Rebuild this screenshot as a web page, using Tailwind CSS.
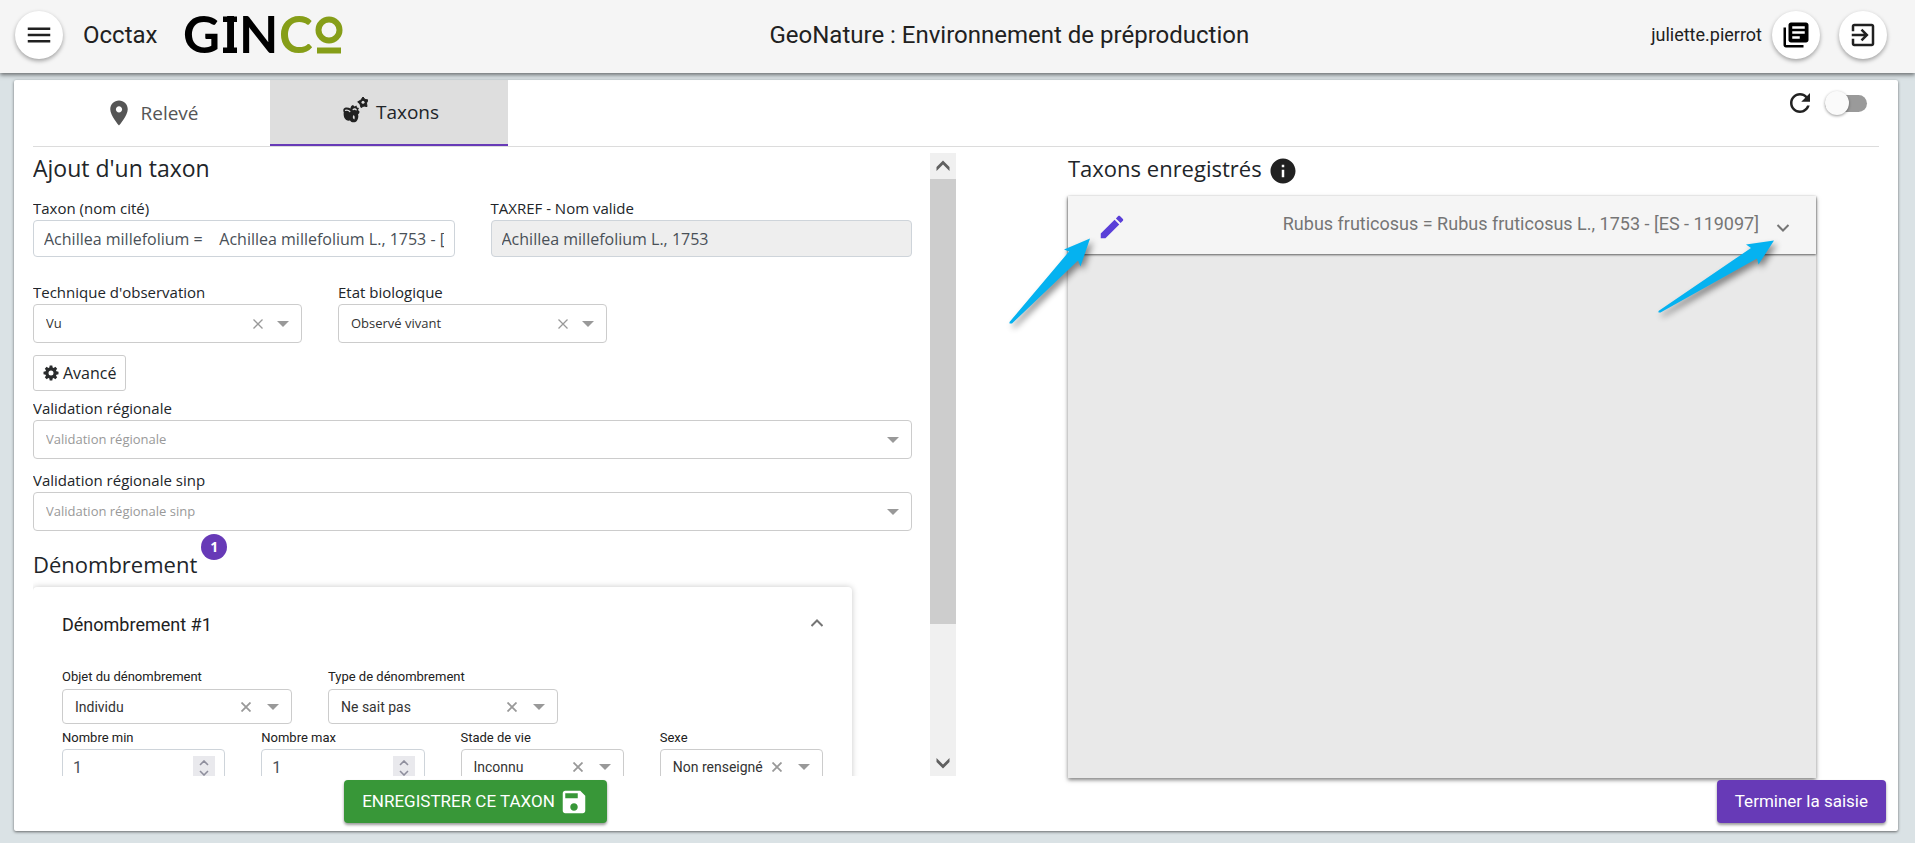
<!DOCTYPE html>
<html lang="fr">
<head>
<meta charset="utf-8">
<title>GeoNature - Occtax</title>
<script src="https://cdn.jsdelivr.net/npm/@tailwindcss/browser@4"></script>
</head>
<body class="h-screen min-h-[600px] flex flex-col bg-[#dae2e5] overflow-hidden font-['Open_Sans','Noto_Sans',sans-serif] text-[#212529]">

<header class="relative z-10 h-[73px] shrink-0 flex items-center justify-between pl-[15px] pr-7 pb-1 bg-[#f5f5f5] shadow-[0_2px_4px_rgba(0,0,0,0.5)] font-[Roboto,sans-serif] text-[#212121]">
  <div class="flex items-center pr-5">
    <button type="button" aria-label="Menu" class="size-12 rounded-full bg-white shadow-[0_2px_4px_rgba(0,0,0,0.35)] grid place-items-center">
      <svg class="size-[30px]" viewBox="0 0 24 24" fill="currentColor"><path d="M3 18h18v-2H3v2zm0-5h18v-2H3v2zm0-7v2h18V6H3z"/></svg>
    </button>
    <span class="ml-5 text-2xl">Occtax</span>
    <svg class="ml-7 w-[162px] h-[68px] overflow-visible" viewBox="0 -12 162 68" role="img" aria-label="GINCO">
      <g font-family="Lato, sans-serif" font-weight="700" font-size="51">
        <text x="-2" y="40" fill="#000">G</text>
        <text x="38" y="40" fill="#000">I</text>
        <text x="54" y="40" fill="#000">N</text>
        <text x="94" y="40" fill="#869e18">C</text>
      </g>
      <path d="M38 3.500h14v5.500H38zM38 34.500h14V40H38z" fill="#000"/>
      <circle cx="144" cy="17" r="10.500" fill="none" stroke="#869e18" stroke-width="6"/>
      <path d="M132 34.500h24v6h-24z" fill="#869e18"/>
    </svg>
  </div>
  <h1 class="text-2xl">GeoNature : Environnement de préproduction</h1>
  <div class="flex items-center justify-end">
    <span class="text-lg">juliette.pierrot</span>
    <button type="button" aria-label="Documentation" class="ml-2.5 size-12 rounded-full bg-white shadow-[0_2px_4px_rgba(0,0,0,0.35)] grid place-items-center">
      <svg class="size-[30px]" viewBox="0 0 24 24" fill="#000"><path d="M4 6H2v14c0 1.100.9 2 2 2h14v-2H4V6zm16-4H8c-1.100 0-2 .9-2 2v12c0 1.100.9 2 2 2h12c1.100 0 2-.9 2-2V4c0-1.100-.9-2-2-2zm-1 9H9V9h10v2zm-4 4H9v-2h6v2zm4-8H9V5h10v2z"/></svg>
    </button>
    <button type="button" aria-label="Déconnexion" class="ml-[19px] size-12 rounded-full bg-white shadow-[0_2px_4px_rgba(0,0,0,0.35)] grid place-items-center">
      <svg class="size-[30px]" viewBox="0 0 24 24" fill="currentColor"><path d="M10.090 15.590L11.500 17l5-5-5-5-1.410 1.410L12.670 11H3v2h9.670l-2.580 2.590zM19 3H5c-1.110 0-2 .9-2 2v4h2V5h14v14H5v-4H3v4c0 1.100.89 2 2 2h14c1.100 0 2-.9 2-2V5c0-1.100-.9-2-2-2z"/></svg>
    </button>
  </div>
</header>

<main class="flex-1 min-h-0 flex flex-col mt-[7px] mb-3 ml-3.5 mr-[17px] bg-white rounded-xs shadow-[0_1px_3px_rgba(0,0,0,0.55)]">

  <div class="mx-[19px] h-[67px] shrink-0 flex border-b border-[#dcdcdc]">
    <nav class="flex text-[19px]">
      <a href="#releve" class="w-[237px] flex items-center justify-center gap-1.5 text-[#555]">
        <svg class="size-[30px]" viewBox="0 0 24 24" fill="currentColor"><path d="M12 2C8.130 2 5 5.130 5 9c0 5.250 7 13 7 13s7-7.750 7-13c0-3.870-3.130-7-7-7zm0 9.500c-1.380 0-2.500-1.120-2.500-2.500s1.120-2.500 2.500-2.500 2.500 1.120 2.500 2.500-1.120 2.500-2.500 2.500z"/></svg>
        Relevé
      </a>
      <a href="#taxons" class="w-[238px] pl-1 flex items-center justify-center gap-2 bg-[#dedede] border-b-2 border-[#673ab7]">
        <svg class="w-[25px] h-[26px] mb-1" viewBox="0 0 25 26" fill="#212121">
          <path d="M10 8l1.500 1.500 2-1 .5 2 2 .5-1 2 1.500 1.500c0 2-1 2.500-1.500 3 1 3-.5 6.500-2.500 7.500-2 .8-4.500.3-5.500-1.500-2.500.5-4.500-.5-5.500-2.500C.5 18.500.5 16.500.8 15.500-.2 13.500.3 11.500 2 10.800c2-.6 4 0 5.500.7C7.500 9.500 8.500 8.500 10 8z"/>
          <path d="M2.500 13.300c1.500-.5 3.200 0 4.300 1.200M10.200 12.500c1-.8 2.300-.6 3 .3" fill="none" stroke="#dedede" stroke-width="1.300" stroke-linecap="round"/>
          <path d="M10.500 18c1.200.8 1.700 2.600.8 4.500-1.500-.5-2-2.700-.8-4.500z" fill="#dedede"/>
          <path d="M20 0l1.800 2.300 3.200.7-1.500 3 .5 3.600-3-.6L18 10.500l-1-3.300-2.300-2.400 3-1.500z" stroke="#212121" stroke-linejoin="round"/>
          <circle cx="20" cy="5.300" r="1.500" fill="#dedede"/>
        </svg>
        Taxons
      </a>
    </nav>
    <div class="ml-auto h-[46px] pr-3 flex items-center gap-2.5">
      <button type="button" aria-label="Rafraîchir">
        <svg class="size-[30px]" viewBox="0 0 24 24" fill="#212121"><path d="M17.650 6.350C16.200 4.900 14.210 4 12 4c-4.420 0-7.990 3.580-7.990 8s3.570 8 7.990 8c3.730 0 6.840-2.550 7.730-6h-2.080c-.82 2.330-3.040 4-5.650 4-3.310 0-6-2.690-6-6s2.690-6 6-6c1.660 0 3.140.69 4.220 1.780L13 11h7V4l-2.350 2.350z"/></svg>
      </button>
      <label class="w-[42px] h-[17px] rounded-full bg-[#9a9a9a] flex items-center cursor-pointer">
        <input type="checkbox" aria-label="Afficher" class="appearance-none size-6 shrink-0 rounded-full bg-[#fafafa] shadow-[0_1px_3px_rgba(0,0,0,0.4)]">
      </label>
    </div>
  </div>

  <div class="flex-1 min-h-0 mx-[19px] grid grid-cols-2 grid-rows-[minmax(0,1fr)]">

    <section class="mt-1.5 mb-0.5 flex min-h-0">
      <div class="flex-1 min-w-0 overflow-hidden pr-[18px]">
        <h2 class="h-11 pt-px text-[23px] leading-7">Ajout d'un taxon</h2>

        <div class="grid grid-cols-2 gap-9">
          <div>
            <label for="nom" class="block h-[23px] text-[15px] leading-[22px]">Taxon (nom cité)</label>
            <input id="nom" class="block w-full h-[37px] px-2.5 border border-[#ced4da] rounded text-base text-[#495057]" value="Achillea millefolium =&nbsp;&nbsp;&nbsp;&nbsp;Achillea millefolium L., 1753 - [ES - 79908]">
          </div>
          <div>
            <label for="valide" class="block h-[23px] text-[15px] leading-[22px]">TAXREF - Nom valide</label>
            <input id="valide" readonly class="block w-full h-[37px] px-2.5 border border-[#ced4da] rounded text-base text-[#495057] bg-[#eee]" value="Achillea millefolium L., 1753">
          </div>
        </div>

        <div class="mt-6 flex gap-9">
          <div class="w-[269px]">
            <label for="technique" class="block h-[23px] text-[15px] leading-[22px]">Technique d'observation</label>
            <div class="h-[39px] flex items-center border border-[#ccc] rounded pl-3 pr-3">
              <select id="technique" class="appearance-none flex-1 min-w-0 bg-transparent text-[13px] text-[#333]"><option>Vu</option></select>
              <button type="button" aria-label="Effacer" class="mr-3.5"><svg class="size-2.5" viewBox="0 0 10 10" stroke="#999" stroke-width="1.300"><path d="M.5.5l9 9m0-9l-9 9"/></svg></button>
              <svg class="w-3 h-1.5" viewBox="0 0 12 6" fill="#999"><path d="M0 0h12L6 6z"/></svg>
            </div>
          </div>
          <div class="w-[269px]">
            <label for="etat" class="block h-[23px] text-[15px] leading-[22px]">Etat biologique</label>
            <div class="h-[39px] flex items-center border border-[#ccc] rounded pl-3 pr-3">
              <select id="etat" class="appearance-none flex-1 min-w-0 bg-transparent text-[13px] text-[#333]"><option>Observé vivant</option></select>
              <button type="button" aria-label="Effacer" class="mr-3.5"><svg class="size-2.5" viewBox="0 0 10 10" stroke="#999" stroke-width="1.300"><path d="M.5.5l9 9m0-9l-9 9"/></svg></button>
              <svg class="w-3 h-1.5" viewBox="0 0 12 6" fill="#999"><path d="M0 0h12L6 6z"/></svg>
            </div>
          </div>
        </div>

        <button type="button" class="mt-3 h-9 px-[9px] flex items-center gap-1 border border-[#ccc] rounded-[3px] text-base">
          <svg class="size-4" viewBox="0 0 16 16" fill="#292b2c" fill-rule="evenodd"><path d="M6.700.5h2.600l.35 2.100 1 .4 1.700-1.200 1.850 1.850-1.200 1.700.4 1 2.100.35v2.600l-2.100.35-.4 1 1.200 1.700-1.850 1.850-1.700-1.200-1 .4-.35 2.100H6.700l-.35-2.100-1-.4-1.700 1.200L1.800 12.350l1.200-1.700-.4-1L.5 9.300V6.700l2.100-.35.4-1-1.200-1.700L3.650 1.800l1.700 1.200 1-.4zM8 5.500a2.500 2.500 0 100 5 2.500 2.500 0 000-5z"/></svg>
          Avancé
        </button>

        <div class="mt-1.5">
          <label for="valreg" class="block h-[23px] text-[15px] leading-[22px]">Validation régionale</label>
          <div class="h-[39px] flex items-center border border-[#ccc] rounded pl-3 pr-3">
            <select id="valreg" class="appearance-none flex-1 bg-transparent text-[13px] text-[#999]"><option>Validation régionale</option></select>
            <svg class="w-3 h-1.5" viewBox="0 0 12 6" fill="#999"><path d="M0 0h12L6 6z"/></svg>
          </div>
        </div>
        <div class="mt-2.5">
          <label for="valsinp" class="block h-[23px] text-[15px] leading-[22px]">Validation régionale sinp</label>
          <div class="h-[39px] flex items-center border border-[#ccc] rounded pl-3 pr-3">
            <select id="valsinp" class="appearance-none flex-1 bg-transparent text-[13px] text-[#999]"><option>Validation régionale sinp</option></select>
            <svg class="w-3 h-1.5" viewBox="0 0 12 6" fill="#999"><path d="M0 0h12L6 6z"/></svg>
          </div>
        </div>

        <div class="mt-[3px] h-[53px] flex items-start gap-1">
          <h2 class="pt-4 text-[22px] leading-7">Dénombrement</h2>
          <span class="size-[26px] rounded-full bg-[#673ab7] text-white text-sm font-bold grid place-items-center">1</span>
        </div>

        <div class="mr-[60px] px-[29px] h-[260px] rounded bg-white shadow-[0_0_6px_rgba(0,0,0,0.22)] font-[Roboto,sans-serif]">
          <div class="h-[78px] pb-0.5 flex items-center justify-between">
            <h3 class="text-lg leading-6 text-[#212121]">Dénombrement #1</h3>
            <svg class="w-3 h-3 mb-1" viewBox="3 0 12 12" fill="none" stroke="#757575" stroke-width="2"><path d="M3.500 9L9 3.500 14.500 9"/></svg>
          </div>
          <div class="flex gap-9">
            <div class="w-[230px]">
              <label for="objet" class="block h-6 text-[13px] leading-6 text-[#212121]">Objet du dénombrement</label>
              <div class="h-[35px] flex items-center border border-[#ccc] rounded pl-3 pr-3">
                <select id="objet" class="appearance-none flex-1 min-w-0 bg-transparent text-sm text-[#333]"><option>Individu</option></select>
                <button type="button" aria-label="Effacer" class="mr-4"><svg class="size-2.5" viewBox="0 0 10 10" stroke="#999" stroke-width="1.800"><path d="M.5.5l9 9m0-9l-9 9"/></svg></button>
                <svg class="w-3 h-1.5" viewBox="0 0 12 6" fill="#999"><path d="M0 0h12L6 6z"/></svg>
              </div>
            </div>
            <div class="w-[230px]">
              <label for="typed" class="block h-6 text-[13px] leading-6 text-[#212121]">Type de dénombrement</label>
              <div class="h-[35px] flex items-center border border-[#ccc] rounded pl-3 pr-3">
                <select id="typed" class="appearance-none flex-1 min-w-0 bg-transparent text-sm text-[#333]"><option>Ne sait pas</option></select>
                <button type="button" aria-label="Effacer" class="mr-4"><svg class="size-2.5" viewBox="0 0 10 10" stroke="#999" stroke-width="1.800"><path d="M.5.5l9 9m0-9l-9 9"/></svg></button>
                <svg class="w-3 h-1.5" viewBox="0 0 12 6" fill="#999"><path d="M0 0h12L6 6z"/></svg>
              </div>
            </div>
          </div>
          <div class="mt-0.5 grid grid-cols-4 gap-9">
            <div>
              <label for="nmin" class="block h-[23px] text-[13px] leading-6 text-[#212121]">Nombre min</label>
              <div class="h-[37px] flex items-center border border-[#ced4da] rounded pl-2.5 pr-[9px]">
                <input id="nmin" type="number" value="1" class="flex-1 min-w-0 text-base text-[#495057] [appearance:textfield] [&::-webkit-inner-spin-button]:appearance-none">
                <span class="w-[22px] h-[23px] bg-[#e9e9ed] grid place-items-center"><svg class="w-2.5 h-4" viewBox="0 0 10 16" fill="none" stroke="#8f8f9d" stroke-width="1.600"><path d="M1 5l4-4 4 4M1 11l4 4 4-4"/></svg></span>
              </div>
            </div>
            <div>
              <label for="nmax" class="block h-[23px] text-[13px] leading-6 text-[#212121]">Nombre max</label>
              <div class="h-[37px] flex items-center border border-[#ced4da] rounded pl-2.5 pr-[9px]">
                <input id="nmax" type="number" value="1" class="flex-1 min-w-0 text-base text-[#495057] [appearance:textfield] [&::-webkit-inner-spin-button]:appearance-none">
                <span class="w-[22px] h-[23px] bg-[#e9e9ed] grid place-items-center"><svg class="w-2.5 h-4" viewBox="0 0 10 16" fill="none" stroke="#8f8f9d" stroke-width="1.600"><path d="M1 5l4-4 4 4M1 11l4 4 4-4"/></svg></span>
              </div>
            </div>
            <div>
              <label for="stade" class="block h-[23px] text-[13px] leading-6 text-[#212121]">Stade de vie</label>
              <div class="h-[35px] flex items-center border border-[#ccc] rounded pl-3 pr-3">
                <select id="stade" class="appearance-none flex-1 min-w-0 bg-transparent text-sm text-[#333]"><option>Inconnu</option></select>
                <button type="button" aria-label="Effacer" class="mr-4"><svg class="size-2.5" viewBox="0 0 10 10" stroke="#999" stroke-width="1.800"><path d="M.5.5l9 9m0-9l-9 9"/></svg></button>
                <svg class="w-3 h-1.5" viewBox="0 0 12 6" fill="#999"><path d="M0 0h12L6 6z"/></svg>
              </div>
            </div>
            <div>
              <label for="sexe" class="block h-[23px] text-[13px] leading-6 text-[#212121]">Sexe</label>
              <div class="h-[35px] flex items-center border border-[#ccc] rounded pl-3 pr-3">
                <select id="sexe" class="appearance-none flex-1 min-w-0 bg-transparent text-sm text-[#333]"><option>Non renseigné</option></select>
                <button type="button" aria-label="Effacer" class="mr-4"><svg class="size-2.5" viewBox="0 0 10 10" stroke="#999" stroke-width="1.800"><path d="M.5.5l9 9m0-9l-9 9"/></svg></button>
                <svg class="w-3 h-1.5" viewBox="0 0 12 6" fill="#999"><path d="M0 0h12L6 6z"/></svg>
              </div>
            </div>
          </div>
        </div>
      </div>

      <div class="w-[26px] shrink-0 flex flex-col bg-[#f0f0f0]">
        <button type="button" aria-label="Défiler vers le haut" class="h-[26px] grid place-items-center"><svg class="w-3.5 h-3" viewBox="0 0 14 12" fill="#606060"><path d="M.5 7L7 .5 13.500 7v4L7 4.500.5 11z"/></svg></button>
        <div class="flex-1"><div class="h-[78%] bg-[#cdcdcd]"></div></div>
        <button type="button" aria-label="Défiler vers le bas" class="h-[26px] grid place-items-center"><svg class="w-3.5 h-3" viewBox="0 0 14 12" fill="#606060"><path d="M.5 5L7 11.500 13.500 5V1L7 7.500.5 1z"/></svg></button>
      </div>
    </section>

    <section class="pl-28 pr-[63px] pt-1.5 flex flex-col min-h-0">
      <div class="h-[43px] flex items-start gap-1.5">
        <h2 class="pt-px text-[22px] leading-7">Taxons enregistrés</h2>
        <svg class="mt-[3px] size-[30px]" viewBox="0 0 24 24" fill="#212121"><path d="M12 2C6.480 2 2 6.480 2 12s4.480 10 10 10 10-4.480 10-10S17.520 2 12 2zm1 15h-2v-6h2v6zm0-8h-2V7h2v2z"/></svg>
      </div>
      <div class="relative flex-1 bg-[#e9e9e9] shadow-[0_2px_4px_rgba(0,0,0,0.5)]">
        <div class="h-[58px] pl-[29px] pr-6 flex items-center justify-between bg-[#f5f5f5] shadow-[0_1px_2px_rgba(0,0,0,0.6)] font-[Roboto,sans-serif]">
          <button type="button" aria-label="Modifier" class="mt-1">
            <svg class="size-[30px]" viewBox="0 0 24 24" fill="#5a3fd8"><path d="M3 17.250V21h3.750L17.810 9.940l-3.750-3.750L3 17.250zM20.710 7.040c.39-.39.39-1.020 0-1.410l-2.340-2.340c-.39-.39-1.020-.39-1.410 0l-1.830 1.830 3.750 3.750 1.830-1.830z"/></svg>
          </button>
          <div class="flex items-center gap-[15px] text-lg text-[#757575]">
            <span class="pb-0.5">Rubus fruticosus = Rubus fruticosus L., 1753 - [ES - 119097]</span>
            <svg class="w-[18px] h-3 mt-1.5" viewBox="0 0 18 12" fill="none" stroke="#757575" stroke-width="2"><path d="M3.500 3L9 8.500 14.500 3"/></svg>
          </div>
        </div>
        <svg class="absolute left-[-68px] top-8 w-[110px] h-[110px] overflow-visible drop-shadow-[3px_4px_3px_rgba(0,0,0,0.45)]" viewBox="0 0 110 110" fill="#05b2f0" aria-hidden="true"><path d="M90 10.500L80.500 38.500 78 32.500 12 95.500 9.500 95.500 9.500 94 69 23.500 64 21.500z"/></svg>
        <svg class="absolute right-[26px] top-8 w-[150px] h-[110px] overflow-visible drop-shadow-[3px_4px_3px_rgba(0,0,0,0.45)]" viewBox="0 0 150 110" fill="#05b2f0" aria-hidden="true"><path d="M134 12.500L118.500 36.500 117 30.500 20.500 84.500 18.500 84.500 18.500 83 111 20 106 16.500z"/></svg>
      </div>
    </section>
  </div>

  <footer class="mt-0.5 mb-2 flex justify-between pr-3 font-[Roboto,sans-serif]">
    <div class="w-1/2 pl-[19px] pr-8 flex justify-center">
      <button type="button" class="h-[43px] px-[18px] flex items-center gap-1 rounded bg-[#389738] text-white text-[17px] shadow-[0_2px_3px_rgba(0,0,0,0.4)] whitespace-nowrap">
        ENREGISTRER CE TAXON
        <svg class="size-[30px]" viewBox="0 0 24 24" fill="#fff"><path d="M17 3H5c-1.110 0-2 .9-2 2v14c0 1.100.89 2 2 2h14c1.100 0 2-.9 2-2V7l-4-4zm-5 16c-1.660 0-3-1.340-3-3s1.340-3 3-3 3 1.340 3 3-1.340 3-3 3zm3-10H5V5h10v4z"/></svg>
      </button>
    </div>
    <button type="button" class="relative h-[43px] px-[18px] rounded bg-[#673ab7] text-white text-[17px] shadow-[0_2px_3px_rgba(0,0,0,0.4)]">Terminer la saisie</button>
  </footer>
</main>
</body>
</html>
